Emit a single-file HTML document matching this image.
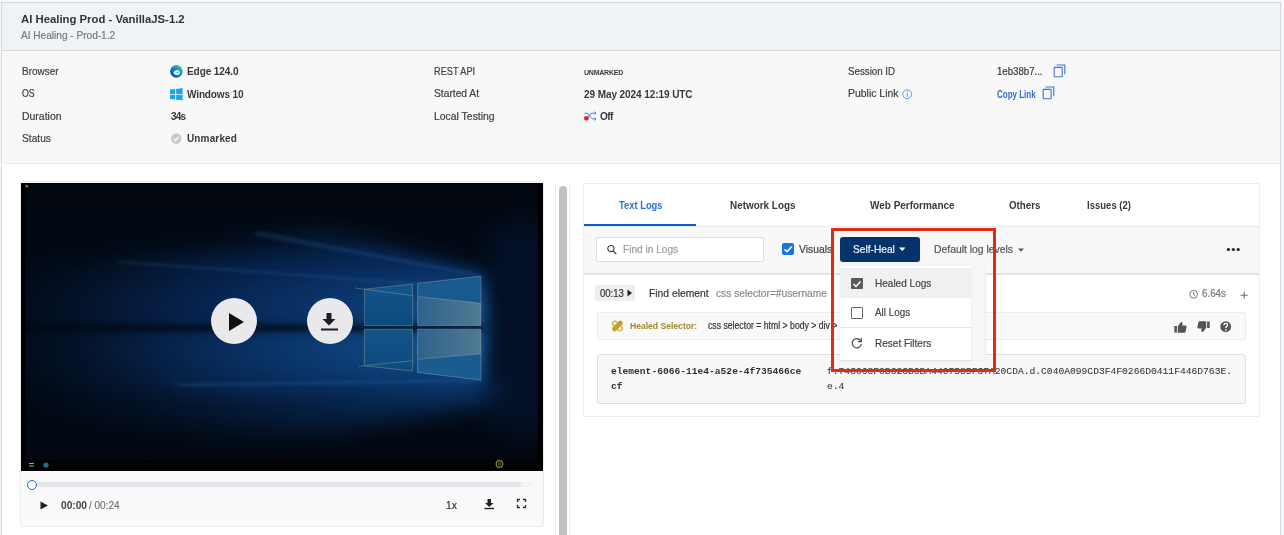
<!DOCTYPE html>
<html><head><meta charset="utf-8">
<style>
html,body{margin:0;padding:0}
body{width:1284px;height:535px;overflow:hidden;position:relative;background:#f6f7f9;font-family:"Liberation Sans",sans-serif}
.a{position:absolute;box-sizing:border-box}
.t{position:absolute;white-space:nowrap;transform-origin:0 0;-webkit-text-stroke:0.2px currentColor}
svg{position:absolute;overflow:visible}
</style></head><body>
<!-- outer card -->
<div class="a" style="left:1px;top:2px;width:1280px;height:540px;border:1px solid #d6d9dd;background:#fff"></div>
<div class="a" style="left:2px;top:3px;width:1278px;height:47px;background:#f0f3f6"></div>
<div class="a" style="left:2px;top:50px;width:1278px;height:1px;background:#d3d6da"></div>
<div class="a" style="left:2px;top:51px;width:1278px;height:112px;background:#f8f8f9"></div>
<div class="a" style="left:4px;top:163px;width:1276px;height:1px;background:#eaeaea"></div>

<!-- video card -->
<div class="a" style="left:20px;top:181px;width:524px;height:346px;border:1px solid #ececec;border-radius:3px;background:#f9f9fa"></div>
<div class="a" style="left:21px;top:183px;width:522px;height:288px;overflow:hidden;background:linear-gradient(to bottom,#02070f 0%,#030b19 45%,#030b19 60%,#02070f 100%)">
  <div class="a" style="left:0;top:0;width:522px;height:288px;filter:blur(12px)">
    <div class="a" style="left:0;top:0;width:522px;height:288px;clip-path:polygon(462px 190px,482px 215px,300px 252px,150px 265px,0px 265px,0px 200px);background:radial-gradient(ellipse 470px 75px at 462px 200px,rgba(14,66,128,0.95) 0%,rgba(8,44,90,0.8) 40%,rgba(6,30,64,0.5) 75%,rgba(4,16,36,0) 100%)"></div>
    <div class="a" style="left:0;top:0;width:522px;height:288px;clip-path:polygon(462px 92px,300px 45px,200px 60px,0px 85px,0px 200px,462px 200px);background:linear-gradient(to right,rgba(5,25,55,0.1) 0%,rgba(7,34,72,0.5) 50%,rgba(12,58,110,0.8) 100%)"></div>
    <div class="a" style="left:470px;top:40px;width:60px;height:210px;background:rgba(4,18,42,0.9)"></div>
  </div>
  <div class="a" style="left:0;top:0;width:522px;height:288px;filter:blur(6px)">
    <div class="a" style="left:0;top:0;width:522px;height:288px;clip-path:polygon(462px 90px,340px 62px,120px 74px,0px 92px,0px 143px,462px 143px);background:radial-gradient(ellipse 480px 95px at 462px 125px,#185ca2 0%,#0c3a72 25%,#072654 55%,rgba(5,22,48,0.5) 85%,rgba(4,16,36,0) 100%)"></div>
    <div class="a" style="left:0;top:0;width:522px;height:288px;clip-path:polygon(462px 147px,0px 147px,0px 205px,230px 214px,462px 199px);background:radial-gradient(ellipse 480px 95px at 462px 165px,#1a60a8 0%,#0e427c 25%,#082c5c 55%,rgba(5,22,48,0.55) 85%,rgba(4,16,36,0) 100%)"></div>
    <div class="a" style="left:0;top:0;width:522px;height:288px;background:radial-gradient(ellipse 12px 60px at 463px 145px,rgba(30,110,190,0.3) 0%,rgba(20,80,150,0) 100%)"></div>
  </div>
  <div class="a" style="left:0;top:0;width:522px;height:288px;filter:blur(2px)">
    <div class="a" style="left:-10px;top:141.5px;width:472px;height:6px;background:linear-gradient(to right,#020814,#031226 60%,#05203c)"></div>
  </div>
  <div class="a" style="left:0;top:0;width:522px;height:288px;filter:blur(1.5px);opacity:0.18">
    <div class="a" style="left:0;top:0;width:522px;height:288px;clip-path:polygon(94px 77px,460px 104px,460px 106.5px,100px 80.5px);background:#3a84c8"></div>
    <div class="a" style="left:0;top:0;width:522px;height:288px;clip-path:polygon(150px 200px,460px 196.5px,460px 199px,160px 204px);background:#3a84c8"></div>
    <div class="a" style="left:0;top:0;width:522px;height:288px;clip-path:polygon(240px 48px,460px 91.5px,460px 94px,230px 52px);background:#3a84c8"></div>
  </div>
</div>
<svg style="left:21px;top:183px" width="522" height="288" viewBox="0 0 522 288">
  <defs>
    <linearGradient id="gray" gradientUnits="userSpaceOnUse" x1="397" y1="0" x2="460" y2="0"><stop offset="0" stop-color="#30628a"/><stop offset="1" stop-color="#507a94"/></linearGradient>
    <linearGradient id="pL" x1="0" y1="0" x2="0" y2="1"><stop offset="0" stop-color="#13548a"/><stop offset="1" stop-color="#0d4a7e"/></linearGradient>
  </defs>
  <polygon points="343.4,106.2 391.6,101 391.6,142.5 343.4,142.5" fill="url(#pL)"/>
  <polygon points="343.4,146.2 391.6,146.2 391.6,188 343.4,182.8" fill="url(#pL)"/>
  <polygon points="396.6,100.3 459.9,93.1 459.9,120.3 396.6,113.5" fill="#185a8e"/>
  <polygon points="396.6,113.5 459.9,120.3 459.9,142.5 396.6,142.5" fill="url(#gray)"/>
  <polygon points="396.6,146.2 459.9,146.2 459.9,170.8 396.6,176.3" fill="url(#gray)"/>
  <polygon points="396.6,176.3 459.9,170.8 459.9,197.2 396.6,189.4" fill="#1b5c90"/>
  <g stroke="#c9c4a0" stroke-width="0.75" fill="none" opacity="0.42">
    <polygon points="343.4,106.2 391.6,101 391.6,142.5 343.4,142.5"/>
    <polygon points="343.4,146.2 391.6,146.2 391.6,188 343.4,182.8"/>
    <polygon points="396.6,100.3 459.9,93.1 459.9,142.5 396.6,142.5"/>
    <polygon points="396.6,146.2 459.9,146.2 459.9,197.2 396.6,189.4"/>
    <path d="M334,105 L391.6,112.6 M396.6,113.5 L459.9,120.3 M338,183.3 L391.6,177.6 M396.6,176.3 L459.9,170.8"/>
  </g>
  <rect x="0" y="0" width="4.5" height="288" fill="#000"/><rect x="0" y="0" width="522" height="1.5" fill="#000"/><polygon points="4.5,1.2 7.8,3.6 6.2,4.2 5.2,4.6" fill="#8a8f96"/>
  <rect x="517" y="0" width="5" height="288" fill="#000"/>
  <rect x="0" y="277" width="522" height="11" fill="#010204"/>
  <g fill="#9aa"><rect x="8" y="280" width="5" height="1"/><rect x="8" y="282.5" width="5" height="1"/></g>
  <circle cx="25" cy="282" r="2.6" fill="#1f6f86"/>
  <circle cx="478.5" cy="281" r="3.3" fill="none" stroke="#9a7a3a" stroke-width="1.2"/>
  <circle cx="478.5" cy="281" r="2" fill="#204a3c"/>
</svg>
<!-- overlay buttons -->
<div class="a" style="left:211px;top:298px;width:46px;height:46px;border-radius:50%;background:#e9e9ec"></div>
<svg style="left:228px;top:312px" width="17" height="20"><polygon points="1,1 16,10 1,19" fill="#111"/></svg>
<div class="a" style="left:307px;top:298px;width:46px;height:46px;border-radius:50%;background:#e9e9ec"></div>
<svg style="left:320px;top:312px" width="19" height="19"><path d="M6.5,1 H11.5 V7 H15.5 L9,13.5 L2.5,7 H6.5 Z" fill="#1a1f2b"/><rect x="1" y="16.5" width="17" height="2" fill="#1a1f2b"/></svg>

<!-- player controls -->
<div class="a" style="left:37px;top:482px;width:495px;height:5px;border-radius:3px;background:#e3e6ea"></div>
<div class="a" style="left:521px;top:482px;width:11px;height:5px;border-radius:3px;background:#f3f4f6"></div>
<div class="a" style="left:27px;top:479.5px;width:10px;height:10px;border-radius:50%;border:1.5px solid #2b63d8;background:#fff"></div>
<svg style="left:40px;top:501px" width="9" height="9"><polygon points="0.5,0.5 8,4.5 0.5,8.5" fill="#222"/></svg>
<svg style="left:484px;top:498px" width="11" height="12"><path d="M3.5,1 H7 V5 H9.5 L5.25,9 L1,5 H3.5 Z" fill="#222"/><rect x="0.5" y="9.8" width="9.5" height="1.4" fill="#222"/></svg>
<svg style="left:516px;top:498px" width="11" height="11" fill="none" stroke="#333" stroke-width="1.4"><path d="M1.5,4 V1.5 H4 M7,1.5 H9.5 V4 M9.5,7 V9.5 H7 M4,9.5 H1.5 V7"/></svg>

<!-- scrollbar -->
<div class="a" style="left:555px;top:184px;width:15px;height:360px;border-left:1px solid #ececec;border-right:1px solid #ececec;background:#fff"></div>
<div class="a" style="left:559px;top:186px;width:8px;height:360px;border-radius:4px;background:#c1c1c1"></div>

<!-- right card -->
<div class="a" style="left:583px;top:183px;width:677px;height:234px;border:1px solid #ededed;background:#fff"></div>
<div class="a" style="left:584px;top:224px;width:112px;height:2px;background:#0b5ccc"></div>
<div class="a" style="left:584px;top:226px;width:675px;height:47px;background:#f8f8f8;border-top:1px solid #e9e9e9"></div>
<div class="a" style="left:584px;top:273px;width:675px;height:2px;background:#e4e4e4"></div>
<!-- search -->
<div class="a" style="left:596px;top:237px;width:168px;height:25px;border:1px solid #dcdcdc;border-radius:2px;background:#fff"></div>
<svg style="left:606px;top:244px" width="12" height="11" fill="none" stroke="#444" stroke-width="1.2"><circle cx="4.9" cy="4.6" r="3.1"/><path d="M7.2,7 L10.3,10"/></svg>
<!-- checkbox -->
<div class="a" style="left:782px;top:243px;width:12px;height:12px;border-radius:2px;background:#1a73e8"></div>
<svg style="left:782px;top:243px" width="12" height="12"><path d="M2.5,6.2 L5,8.7 L9.8,3.6" fill="none" stroke="#fff" stroke-width="1.6"/></svg>
<!-- self heal button -->
<div class="a" style="left:840px;top:237px;width:80px;height:25px;border-radius:3px;background:#06346a"></div>
<svg style="left:899px;top:247px" width="7" height="5"><polygon points="0,0.5 6.5,0.5 3.25,4" fill="#fff"/></svg>
<svg style="left:1017.5px;top:247.5px" width="7" height="5"><polygon points="0,0.5 6,0.5 3,3.8" fill="#555"/></svg>
<svg style="left:1226px;top:247px" width="15" height="5" fill="#222"><circle cx="2.4" cy="2.5" r="1.6"/><circle cx="7.3" cy="2.5" r="1.6"/><circle cx="12.2" cy="2.5" r="1.6"/></svg>

<!-- log row -->
<div class="a" style="left:595px;top:284.5px;width:40px;height:16px;border-radius:2px;background:#eeeeee"></div>
<svg style="left:626.5px;top:289px" width="6" height="9"><polygon points="0.5,0.5 5,4 0.5,7.5" fill="#222"/></svg>
<svg style="left:1188.5px;top:289.5px" width="10" height="10" fill="none" stroke="#777" stroke-width="1"><circle cx="4.6" cy="4.3" r="3.9"/><path d="M4.6,2 V4.5 L6.3,5.6"/></svg>
<svg style="left:1239.5px;top:290.5px" width="9" height="9" stroke="#666" stroke-width="1"><path d="M4.2,0.5 V7.8 M0.5,4.2 H7.8"/></svg>
<!-- healed box -->
<div class="a" style="left:597px;top:312px;width:649px;height:28px;border:1px solid #ececec;border-radius:2px;background:#f9f9f9"></div>
<svg style="left:611px;top:320px" width="13" height="12"><g transform="rotate(45 6.5 6)"><rect x="0.6" y="3.7" width="11.8" height="4.6" rx="2.3" fill="#fff" stroke="#cda51c" stroke-width="1.2"/></g><g transform="rotate(-45 6.5 6)"><rect x="0" y="3.5" width="13" height="5" rx="2.5" fill="#c9a020"/></g></svg>
<svg style="left:1174px;top:321px" width="13" height="12" fill="#555"><rect x="0.3" y="5" width="2.6" height="6.5"/><path d="M3.8,5.3 L6.6,1.6 Q7.6,0.3 8.4,1.4 Q8.9,2.3 8.2,4.4 H11.6 Q12.8,4.6 12.6,5.9 L11.6,10.8 Q11.3,11.8 10.2,11.8 H3.8 Z"/></svg>
<svg style="left:1197px;top:321px" width="13" height="12" fill="#555"><rect x="10.1" y="0.5" width="2.6" height="6.5"/><path d="M9.2,6.7 L6.4,10.4 Q5.4,11.7 4.6,10.6 Q4.1,9.7 4.8,7.6 H1.4 Q0.2,7.4 0.4,6.1 L1.4,1.2 Q1.7,0.2 2.8,0.2 H9.2 Z"/></svg>
<svg style="left:1220px;top:321px" width="12" height="12"><circle cx="5.7" cy="5.6" r="5.4" fill="#555"/><path d="M3.9,4.3 Q3.9,2.4 5.8,2.4 Q7.6,2.4 7.6,4.1 Q7.6,5.1 6.5,5.7 Q5.9,6.1 5.9,7" fill="none" stroke="#fff" stroke-width="1.4"/><circle cx="5.9" cy="8.8" r="0.85" fill="#fff"/></svg>
<!-- code box -->
<div class="a" style="left:597px;top:354px;width:649px;height:50px;border:1px solid #dfdfdf;border-radius:3px;background:#f7f7f7"></div>

<!-- details icons -->
<svg style="left:170px;top:65px" width="13" height="13" viewBox="0 0 13 13">
  <defs><linearGradient id="eg" x1="0.1" y1="0.9" x2="0.9" y2="0.1"><stop offset="0" stop-color="#0a4c98"/><stop offset="0.55" stop-color="#1a86d6"/><stop offset="1" stop-color="#3dcf86"/></linearGradient></defs>
  <circle cx="6.4" cy="6.4" r="6.3" fill="url(#eg)"/>
  <path d="M3.6,8.2 C3.4,5.6 6.4,4.6 8.4,5.6 C9.6,6.3 10,7.6 9.9,8.4 C8.6,9.9 6.2,10.4 4.9,9.6 C4.2,9.2 3.7,8.8 3.6,8.2 Z" fill="#f4fbff"/>
  <path d="M6.1,7.6 C6.6,6.4 8.6,6.3 9.3,7.7 C8.2,8.1 7.1,8.1 6.1,7.6 Z" fill="#3cc58f"/>
</svg>
<svg style="left:170px;top:88px" width="13" height="13" fill="#18a6e4"><polygon points="0,1.6 5.2,1.0 5.2,5.9 0,5.9"/><polygon points="6.1,0.9 12.6,0.1 12.6,5.9 6.1,5.9"/><polygon points="0,6.8 5.2,6.8 5.2,11.6 0,11.1"/><polygon points="6.1,6.8 12.6,6.8 12.6,12.3 6.1,11.7"/></svg>
<svg style="left:170px;top:132.5px" width="13" height="11"><circle cx="6.3" cy="5.5" r="5.2" fill="#c8c8c8"/><path d="M3.8,5.6 L5.6,7.3 L8.8,4" fill="none" stroke="#fff" stroke-width="1.2"/></svg>
<svg style="left:583px;top:111px" width="14" height="11">
  <path d="M1.5,2.2 H4 Q5.2,2.2 6.4,4.4 L7.5,6.2 Q8.6,8 10,8 H12.5" fill="none" stroke="#4a86d4" stroke-width="1"/>
  <path d="M5,6.6 Q6.4,2.2 9.2,2.2 H12.5" fill="none" stroke="#4a86d4" stroke-width="1"/>
  <path d="M11.6,0.6 L13,2.2 L11.6,3.8 M11.6,6.4 L13,8 L11.6,9.6" fill="none" stroke="#4a86d4" stroke-width="1"/>
  <circle cx="3.4" cy="7.3" r="2.4" fill="#d42a2a"/>
</svg>
<svg style="left:1053px;top:64px" width="13" height="14" fill="none" stroke="#3d76d4" stroke-width="1.1"><rect x="1.2" y="3.4" width="8" height="9.3" rx="0.5"/><path d="M3.6,1 H11.8 V10.3"/></svg>
<svg style="left:1042px;top:86px" width="13" height="14" fill="none" stroke="#3d76d4" stroke-width="1.1"><rect x="1.2" y="3.4" width="8" height="9.3" rx="0.5"/><path d="M3.6,1 H11.8 V10.3"/></svg>
<svg style="left:901.5px;top:88.5px" width="11" height="11"><circle cx="5.2" cy="5.2" r="4.4" fill="none" stroke="#4a8ee0" stroke-width="0.9"/><rect x="4.7" y="4.3" width="1" height="3.5" fill="#4a8ee0"/><circle cx="5.2" cy="2.9" r="0.6" fill="#4a8ee0"/></svg>

<div class="t" style="left:21.00px;top:14px;color:#333;font-size:11.20px;line-height:11.20px;font-weight:bold;-webkit-text-stroke:0;transform:scaleX(1.0123);">AI Healing Prod - VanillaJS-1.2</div>
<div class="t" style="left:21.00px;top:31px;color:#7a7a7a;font-size:10.20px;line-height:10.20px;transform:scaleX(0.9895);">AI Healing - Prod-1.2</div>
<div class="t" style="left:21.70px;top:66px;color:#404040;font-size:10.75px;line-height:10.75px;transform:scaleX(0.9300);">Browser</div>
<div class="t" style="left:21.70px;top:88px;color:#404040;font-size:10.75px;line-height:10.75px;transform:scaleX(0.8133);">OS</div>
<div class="t" style="left:21.70px;top:111px;color:#404040;font-size:10.75px;line-height:10.75px;transform:scaleX(0.9732);">Duration</div>
<div class="t" style="left:21.70px;top:133px;color:#404040;font-size:10.75px;line-height:10.75px;transform:scaleX(0.9500);">Status</div>
<div class="t" style="left:186.60px;top:67px;color:#383838;font-size:10.00px;line-height:10.00px;font-weight:bold;-webkit-text-stroke:0;letter-spacing:-0.089px;transform:scaleX(1.0020);">Edge 124.0</div>
<div class="t" style="left:186.60px;top:90px;color:#383838;font-size:10.00px;line-height:10.00px;font-weight:bold;-webkit-text-stroke:0;letter-spacing:-0.133px;transform:scaleX(1.0020);">Windows 10</div>
<div class="t" style="left:170.70px;top:112px;color:#383838;font-size:10.00px;line-height:10.00px;font-weight:bold;-webkit-text-stroke:0;letter-spacing:-0.850px;transform:scaleX(1.0020);">34s</div>
<div class="t" style="left:186.60px;top:134px;color:#383838;font-size:10.00px;line-height:10.00px;font-weight:bold;-webkit-text-stroke:0;letter-spacing:0.129px;transform:scaleX(1.0020);">Unmarked</div>
<div class="t" style="left:434.20px;top:66px;color:#404040;font-size:10.75px;line-height:10.75px;transform:scaleX(0.8542);">REST API</div>
<div class="t" style="left:434.20px;top:88px;color:#404040;font-size:10.75px;line-height:10.75px;transform:scaleX(0.9542);">Started At</div>
<div class="t" style="left:434.20px;top:111px;color:#404040;font-size:10.75px;line-height:10.75px;transform:scaleX(0.9694);">Local Testing</div>
<div class="t" style="left:583.70px;top:69px;color:#3a3a3a;font-size:7.00px;line-height:7.00px;font-weight:bold;-webkit-text-stroke:0;letter-spacing:-0.243px;transform:scaleX(1.0020);">UNMARKED</div>
<div class="t" style="left:583.70px;top:90px;color:#383838;font-size:10.00px;line-height:10.00px;font-weight:bold;-webkit-text-stroke:0;letter-spacing:-0.085px;transform:scaleX(1.0020);">29 May 2024 12:19 UTC</div>
<div class="t" style="left:599.80px;top:112px;color:#383838;font-size:10.00px;line-height:10.00px;font-weight:bold;-webkit-text-stroke:0;letter-spacing:-0.550px;transform:scaleX(1.0020);">Off</div>
<div class="t" style="left:847.50px;top:66px;color:#404040;font-size:10.75px;line-height:10.75px;transform:scaleX(0.9058);">Session ID</div>
<div class="t" style="left:847.50px;top:88px;color:#404040;font-size:10.75px;line-height:10.75px;transform:scaleX(0.9712);">Public Link</div>
<div class="t" style="left:997.40px;top:67px;color:#383838;font-size:10.20px;line-height:10.20px;transform:scaleX(0.9458);">1eb38b7...</div>
<div class="t" style="left:997.40px;top:90px;color:#2f6fcf;font-size:10.00px;line-height:10.00px;font-weight:bold;-webkit-text-stroke:0;transform:scaleX(0.8000);">Copy Link</div>
<div class="t" style="left:618.70px;top:200px;color:#2a6fd6;font-size:10.50px;line-height:10.50px;font-weight:bold;-webkit-text-stroke:0;transform:scaleX(0.8918);">Text Logs</div>
<div class="t" style="left:729.70px;top:200px;color:#3a3a3a;font-size:10.50px;line-height:10.50px;font-weight:bold;-webkit-text-stroke:0;transform:scaleX(0.9435);">Network Logs</div>
<div class="t" style="left:869.50px;top:200px;color:#3a3a3a;font-size:10.50px;line-height:10.50px;font-weight:bold;-webkit-text-stroke:0;transform:scaleX(0.9494);">Web Performance</div>
<div class="t" style="left:1008.50px;top:200px;color:#3a3a3a;font-size:10.50px;line-height:10.50px;font-weight:bold;-webkit-text-stroke:0;transform:scaleX(0.9294);">Others</div>
<div class="t" style="left:1086.60px;top:200px;color:#3a3a3a;font-size:10.50px;line-height:10.50px;font-weight:bold;-webkit-text-stroke:0;transform:scaleX(0.9083);">Issues (2)</div>
<div class="t" style="left:623.00px;top:244px;color:#9a9a9a;font-size:11.00px;line-height:11.00px;transform:scaleX(0.9200);">Find in Logs</div>
<div class="t" style="left:799.30px;top:244px;color:#444;font-size:11.00px;line-height:11.00px;transform:scaleX(0.9429);">Visuals</div>
<div class="t" style="left:852.80px;top:244px;color:#eaf2ff;font-size:11.00px;line-height:11.00px;transform:scaleX(0.9244);">Self-Heal</div>
<div class="t" style="left:933.60px;top:244px;color:#555;font-size:11.00px;line-height:11.00px;transform:scaleX(0.9429);">Default log levels</div>
<div class="t" style="left:599.60px;top:288px;color:#333;font-size:11.00px;line-height:11.00px;transform:scaleX(0.8679);">00:13</div>
<div class="t" style="left:648.80px;top:288px;color:#333;font-size:11.00px;line-height:11.00px;transform:scaleX(0.9391);">Find element</div>
<div class="t" style="left:716.20px;top:288px;color:#8a8a8a;font-size:11.00px;line-height:11.00px;transform:scaleX(0.9283);">css selector=#username</div>
<div class="t" style="left:1201.60px;top:288px;color:#777;font-size:11.00px;line-height:11.00px;transform:scaleX(0.8889);">6.64s</div>
<div class="t" style="left:630.00px;top:321px;color:#a08a2c;font-size:9.60px;line-height:9.60px;font-weight:bold;-webkit-text-stroke:0;transform:scaleX(0.8933);">Healed Selector:</div>
<div class="t" style="left:708.40px;top:321px;color:#333;font-size:10.00px;line-height:10.00px;transform:scaleX(0.8685);">css selector = html &gt; body &gt; div &gt;</div>
<div class="t" style="left:610.90px;top:367px;color:#333;font-size:9.60px;line-height:9.60px;font-weight:bold;-webkit-text-stroke:0;font-family:'Liberation Mono',monospace;transform:scaleX(1.0020);">element-6066-11e4-a52e-4f735466ce</div>
<div class="t" style="left:610.90px;top:382px;color:#333;font-size:9.60px;line-height:9.60px;font-weight:bold;-webkit-text-stroke:0;font-family:'Liberation Mono',monospace;transform:scaleX(1.0020);">cf</div>
<div class="t" style="left:826.50px;top:367px;color:#3a3a3a;font-size:9.60px;line-height:9.60px;font-family:'Liberation Mono',monospace;transform:scaleX(1.0050);-webkit-text-stroke:0.1px #3a3a3a;">f.743068F0B62CB6BA4407585F37A20CDA.d.C040A099CD3F4F0266D0411F446D763E.</div>
<div class="t" style="left:826.50px;top:382px;color:#3a3a3a;font-size:9.60px;line-height:9.60px;font-family:'Liberation Mono',monospace;transform:scaleX(1.0020);-webkit-text-stroke:0.1px #3a3a3a;">e.4</div>
<div class="t" style="left:61.00px;top:500px;color:#444;font-size:10.75px;line-height:10.75px;font-weight:bold;-webkit-text-stroke:0;transform:scaleX(0.9444);">00:00</div>
<div class="t" style="left:89.00px;top:500px;color:#777;font-size:10.75px;line-height:10.75px;transform:scaleX(0.9303);">/ 00:24</div>
<div class="t" style="left:445.90px;top:500px;color:#333;font-size:10.75px;line-height:10.75px;transform:scaleX(0.9545);">1x</div>

<!-- dropdown -->
<div class="a" style="left:840px;top:265px;width:146px;height:96px;background:#f6f6f6;border-right:1px solid #ececec;border-bottom:1px solid #efefef"></div>
<div class="a" style="left:840px;top:266px;width:131px;height:94px;background:#fff;box-shadow:0 1px 2px rgba(0,0,0,0.08)"></div>
<div class="a" style="left:840px;top:268px;width:131px;height:30px;background:#f1f1f1"></div>
<div class="a" style="left:840px;top:326.5px;width:131px;height:1px;background:#e3e3e3"></div>
<div class="a" style="left:851px;top:277.5px;width:12px;height:11.5px;border-radius:1px;background:#5a5a5a"></div>
<svg style="left:851px;top:277.5px" width="12" height="12"><path d="M2.5,6 L5,8.5 L9.5,3.5" fill="none" stroke="#fff" stroke-width="1.5"/></svg>
<div class="a" style="left:851px;top:307px;width:12px;height:12px;border-radius:1px;border:1.3px solid #666;background:#fff"></div>
<svg style="left:851px;top:336.5px" width="12" height="12" fill="none" stroke="#555" stroke-width="1.3"><path d="M10,4.2 A4.6,4.6 0 1 0 10.4,7.2"/><path d="M10.4,0.8 V4.6 H6.8" stroke-width="1.2"/></svg>
<div class="t" style="left:875.20px;top:278px;color:#444;font-size:11.00px;line-height:11.00px;transform:scaleX(0.9113);">Healed Logs</div>
<div class="t" style="left:875.20px;top:307px;color:#444;font-size:11.00px;line-height:11.00px;transform:scaleX(0.8974);">All Logs</div>
<div class="t" style="left:875.20px;top:338px;color:#444;font-size:11.00px;line-height:11.00px;transform:scaleX(0.9113);">Reset Filters</div>

<!-- red box -->
<div class="a" style="left:831px;top:228px;width:165px;height:144px;border:3px solid #e22c12"></div>
</body></html>
